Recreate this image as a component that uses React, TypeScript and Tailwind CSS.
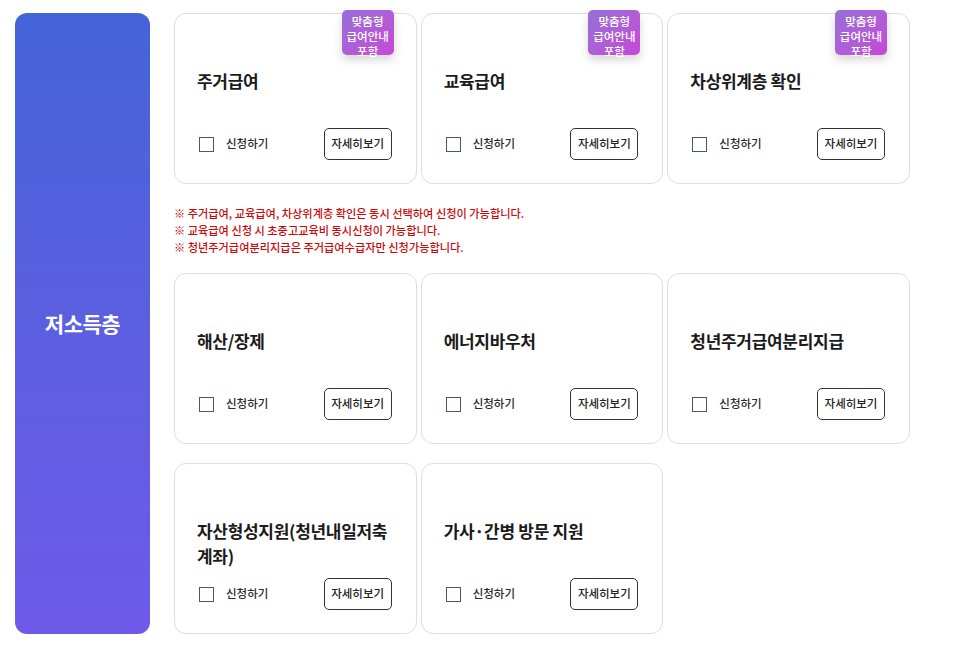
import { useState } from "react";

type Benefit = {
  id: string;
  title: string;
  badge?: boolean;
};

const topRow: Benefit[] = [
  { id: "housing", title: "주거급여", badge: true },
  { id: "education", title: "교육급여", badge: true },
  { id: "nearpoor", title: "차상위계층 확인", badge: true },
];

const restRows: Benefit[] = [
  { id: "funeral", title: "해산/장제" },
  { id: "energy", title: "에너지바우처" },
  { id: "youthhousing", title: "청년주거급여분리지급" },
  { id: "asset", title: "자산형성지원(청년내일저축계좌)" },
  { id: "care", title: "가사·간병 방문 지원" },
];

const notes = [
  "※ 주거급여, 교육급여, 차상위계층 확인은 동시 선택하여 신청이 가능합니다.",
  "※ 교육급여 신청 시 초중고교육비 동시신청이 가능합니다.",
  "※ 청년주거급여분리지급은 주거급여수급자만 신청가능합니다.",
];

function BenefitCard({
  item,
  checked,
  onToggle,
}: {
  item: Benefit;
  checked: boolean;
  onToggle: () => void;
}) {
  return (
    <div className="relative flex h-[171px] flex-col justify-between rounded-[12px] border border-[#dedede] bg-white pt-[54px] pr-[24px] pb-[23px] pl-[22px]">
      {item.badge && (
        <div className="absolute top-[-4px] right-[22px] h-[45px] w-[52px] rounded-[5px] bg-linear-to-br from-[#9470d8] to-[#c646d6] pt-[4px] text-center text-[11.5px] leading-[15px] font-medium text-white shadow-[0_5px_10px_rgba(0,0,0,0.16)]">
          맞춤형
          <br />
          급여안내
          <br />
          포함
        </div>
      )}

      <h3 className="text-[17px] leading-[25px] font-bold tracking-[-0.3px] text-[#1b1b1b]">
        {item.title}
      </h3>

      <div className="flex items-center justify-between">
        <label className="ml-[2px] flex cursor-pointer items-center">
          <span
            onClick={onToggle}
            className={
              checked
                ? "block h-[15px] w-[15px] border border-[#4b5670] bg-[#4b5670]"
                : "block h-[15px] w-[15px] border border-[#4b5670] bg-white"
            }
          />
          <span className="ml-[12px] text-[11.5px] font-medium text-[#2b2b2b]">신청하기</span>
        </label>
        <button className="flex h-[32px] w-[68px] items-center justify-center rounded-[5px] border border-[#333] bg-white text-[11.5px] font-medium text-[#222]">
          자세히보기
        </button>
      </div>
    </div>
  );
}

export default function App() {
  const [selected, setSelected] = useState<string[]>([]);

  const toggle = (id: string) => {
    setSelected((prev) =>
      prev.includes(id) ? prev.filter((x) => x !== id) : [...prev, id]
    );
  };

  return (
    <div
      className="flex min-h-[647px] w-[969px] items-stretch gap-[24px] bg-white pt-[13px] pl-[15px]"
      style={{ fontFamily: '"Noto Sans CJK KR", "Noto Sans", sans-serif' }}
    >
      {/* 왼쪽 카테고리 패널 */}
      <div className="flex h-[621px] w-[135px] items-center justify-center self-start rounded-[12px] bg-linear-to-b from-[#4463d8] to-[#6e5ae9]">
        <span className="text-[21px] font-bold tracking-[-0.5px] text-white">저소득층</span>
      </div>

      <div className="flex w-[736px] flex-col">
        <div className="grid grid-cols-3 gap-x-[4px]">
          {topRow.map((item) => (
            <BenefitCard
              key={item.id}
              item={item}
              checked={selected.includes(item.id)}
              onToggle={() => toggle(item.id)}
            />
          ))}
        </div>

        <div className="mt-[21px] mb-[17px] text-[11.2px] leading-[17px] font-medium text-[#cc0a0a]">
          {notes.map((n) => (
            <p key={n}>{n}</p>
          ))}
        </div>

        <div className="grid grid-cols-3 gap-x-[4px] gap-y-[19px]">
          {restRows.map((item) => (
            <BenefitCard
              key={item.id}
              item={item}
              checked={selected.includes(item.id)}
              onToggle={() => toggle(item.id)}
            />
          ))}
        </div>
      </div>
    </div>
  );
}
